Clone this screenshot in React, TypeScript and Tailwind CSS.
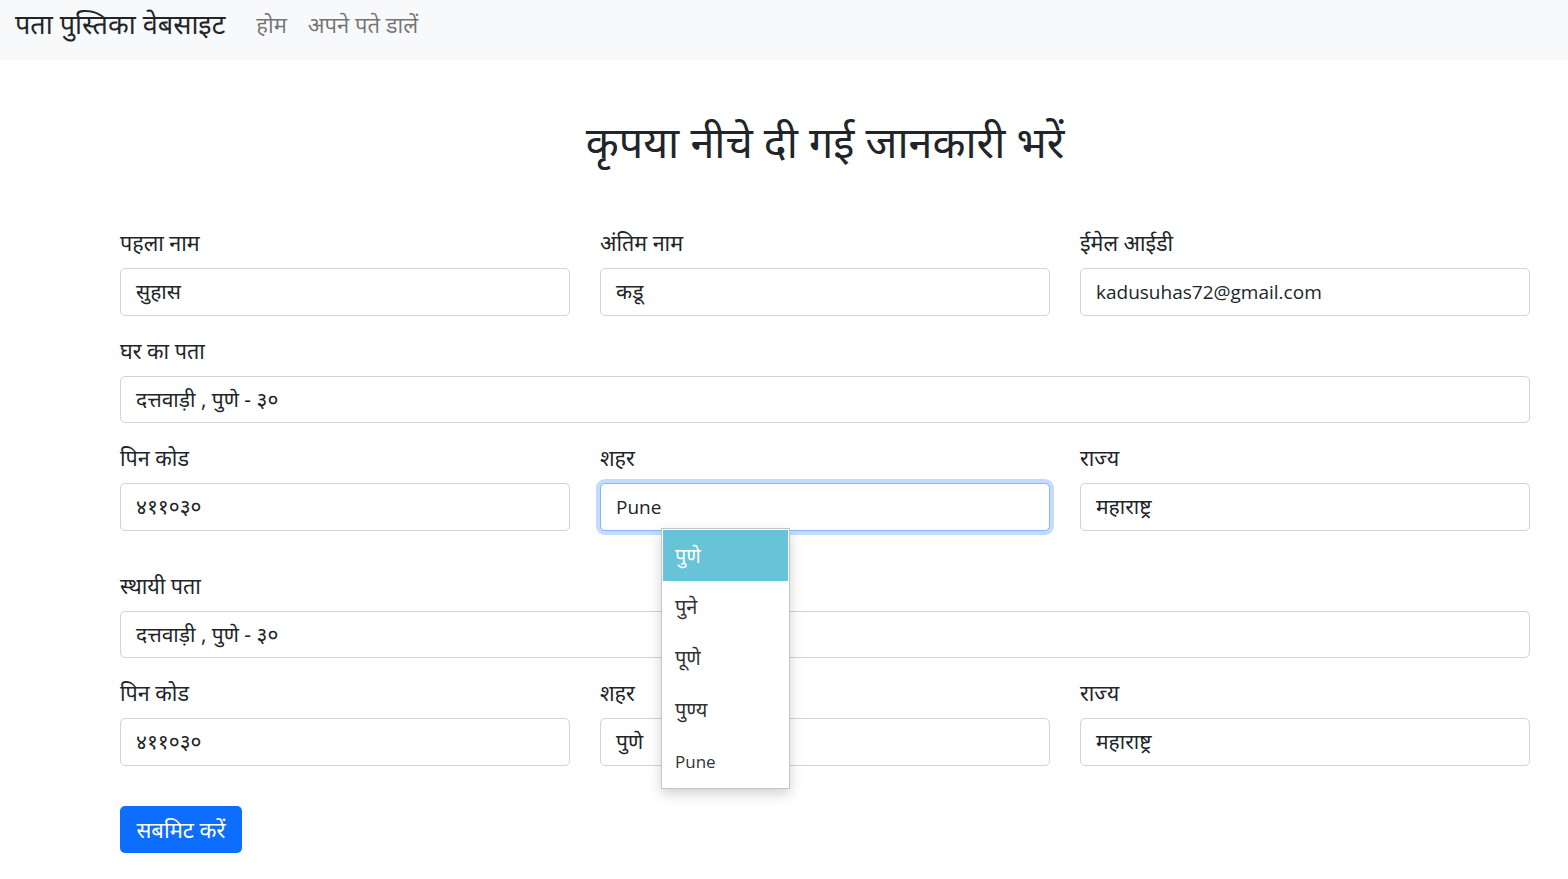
import React from 'react'

const font = { fontFamily: '"Open Sans", "Noto Sans", "Noto Sans Devanagari", sans-serif' }

function Field({ label, value, focused, latin, children }: { label: string; value: string; focused?: boolean; latin?: boolean; children?: React.ReactNode }) {
  return (
    <div className="relative flex flex-col">
      <label className="text-[21.5px] leading-[30px] text-[#212529] mb-[10px]">{label}</label>
      <div
        className={`h-[47.5px] rounded-[5px] bg-white px-[15px] flex items-center text-[#212529] border ${
          latin ? 'text-[19px]' : 'text-[21px]'
        } ${focused ? 'border-[#86b7fe] shadow-[0_0_0_4px_rgba(13,110,253,0.25)]' : 'border-[#ced4da]'}`}
      >
        {value}
      </div>
      {children}
    </div>
  )
}

export default function App() {
  const options = ['पुणे', 'पुने', 'पूणे', 'पुण्य', 'Pune']
  return (
    <div className="min-h-screen bg-white" style={font}>
      <nav className="h-[60px] bg-[#f8f9fa] flex items-start pt-[6px] px-[15px]">
        <span className="text-[27px] leading-[36px] text-[#212529] mr-[31px]">पता पुस्तिका वेबसाइट</span>
        <span className="text-[22px] leading-[36px] text-[rgba(0,0,0,0.55)] mr-[21px]">होम</span>
        <span className="text-[22px] leading-[36px] text-[rgba(0,0,0,0.55)]">अपने पते डालें</span>
      </nav>

      <div className="pl-[120px] pr-[38px]">
        <h1 className="text-center text-[43px] leading-[50px] text-[#212529] mt-[57px] mb-[61px]">कृपया नीचे दी गई जानकारी भरें</h1>

        <div className="flex flex-col gap-[20px]">
          <div className="grid grid-cols-3 gap-[30px]">
            <Field label="पहला नाम" value="सुहास" />
            <Field label="अंतिम नाम" value="कडू" />
            <Field label="ईमेल आईडी" value="kadusuhas72@gmail.com" latin />
          </div>
          <Field label="घर का पता" value="दत्तवाड़ी , पुणे - ३०" />
          <div className="grid grid-cols-3 gap-[30px]">
            <Field label="पिन कोड" value="४११०३०" />
            <div className="relative z-10">
              <Field label="शहर" value="Pune" focused latin>
                <div className="absolute left-[61px] top-[85px] w-[129px] bg-white border border-[#c5c5c5] shadow-[0_5px_12px_rgba(0,0,0,0.18)] p-px">
                  {options.map((o, i) => (
                    <div
                      key={o}
                      className={`h-[51.4px] flex items-center pl-[12px] ${
                        i === 0 ? 'bg-[#66c3d8] text-white' : 'text-[#333]'
                      } ${o === 'Pune' ? 'text-[17px]' : 'text-[20px]'}`}
                    >
                      {o}
                    </div>
                  ))}
                </div>
              </Field>
            </div>
            <Field label="राज्य" value="महाराष्ट्र" />
          </div>
          <div className="mt-[20px]">
            <Field label="स्थायी पता" value="दत्तवाड़ी , पुणे - ३०" />
          </div>
          <div className="grid grid-cols-3 gap-[30px]">
            <Field label="पिन कोड" value="४११०३०" />
            <Field label="शहर" value="पुणे" />
            <Field label="राज्य" value="महाराष्ट्र" />
          </div>
        </div>

        <button className="mt-[40px] h-[47px] w-[122px] rounded-[5px] bg-[#0d6efd] text-white text-[22px]">सबमिट करें</button>
      </div>
    </div>
  )
}
